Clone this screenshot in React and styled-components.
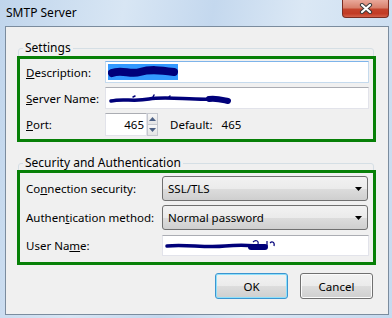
import React from "react";
import styled, { createGlobalStyle } from "styled-components";

const Global = createGlobalStyle`
  html, body {
    margin: 0;
    padding: 0;
    width: 392px;
    height: 318px;
    overflow: hidden;
  }
  body {
    font-family: "Noto Sans", "DejaVu Sans", sans-serif;
    font-size: 11.5px;
    color: #000;
  }
`;

const Frame = styled.div`
  width: 392px;
  height: 318px;
  box-sizing: border-box;
  padding: 0 3px 3px 5px;
  display: flex;
  flex-direction: column;
  background: linear-gradient(100deg, #c0d5ec 0%, #d8e6f4 28%, #c4d8ee 48%, #dbe8f5 68%, #c6daef 100%);
`;

const TitleBar = styled.div`
  height: 26px;
  display: flex;
  justify-content: space-between;
  align-items: flex-start;
  flex-shrink: 0;
`;

const Title = styled.div`
  line-height: 26px;
  margin-left: 1px;
  font-size: 12px;
`;

const CloseButton = styled.div`
  width: 47px;
  height: 18px;
  box-sizing: border-box;
  border: 1px solid #7a2d22;
  border-top: none;
  border-radius: 0 0 4px 4px;
  background: linear-gradient(#e9a89a 0%, #d8806c 45%, #c4432c 55%, #c23b25 80%, #d3614a 100%);
  display: flex;
  align-items: center;
  justify-content: center;
`;

const Content = styled.div`
  flex: 1;
  background: #f0f0f0;
  border: 1px solid #7b8c9e;
  padding: 13px 14px 0 12px;
  display: flex;
  flex-direction: column;
`;

const GroupBox = styled.fieldset`
  margin: ${p => p.$top || 0}px 0 0 0;
  padding: 0;
  min-width: 0;
  border: 1px solid #d5dfe5;
  border-radius: 3px;
`;

const Legend = styled.legend`
  margin-left: 4px;
  padding: 0 2px;
  line-height: 16px;
  font-size: 12px;
`;

const GreenBox = styled.div`
  margin: ${p => p.$shift || 0}px -3px -1px -2px;
  border: 3px solid #078007;
  padding: ${p => p.$pad};
  display: flex;
  flex-direction: column;
`;

const Row = styled.div`
  display: flex;
  align-items: center;
  height: ${p => p.$h}px;
  margin-top: ${p => p.$gap || 0}px;
`;

const Label = styled.div`
  width: ${p => p.$w}px;
  flex-shrink: 0;
  white-space: nowrap;
`;

const Key = styled.span`
  text-decoration: underline;
`;

const TextBox = styled.div`
  position: relative;
  flex: ${p => (p.$width ? "none" : 1)};
  width: ${p => (p.$width ? `${p.$width}px` : "auto")};
  height: 100%;
  box-sizing: border-box;
  background: #fff;
  border: 1px solid ${p => (p.$focus ? "#c5daed" : "#e2e3ea")};
  border-top-color: ${p => (p.$focus ? "#7eb4ea" : "#abadb3")};
  display: flex;
  align-items: center;
  justify-content: ${p => (p.$right ? "flex-end" : "flex-start")};
  padding: 0 2px 0 2px;
  overflow: hidden;
  white-space: nowrap;
`;

const Selected = styled.span`
  display: inline-block;
  width: 70px;
  height: 16px;
  background: #3399ff;
`;

const Scribble = styled.svg`
  position: absolute;
  left: ${p => p.$x}px;
  top: ${p => p.$y}px;
`;

const Spinner = styled.div`
  width: 11px;
  height: 100%;
  display: flex;
  flex-direction: column;
  flex-shrink: 0;
`;

const SpinHalf = styled.div`
  flex: 1;
  box-sizing: border-box;
  border: 1px solid #c5c8cf;
  ${p => (p.$down ? "border-top: none;" : "")}
  background: linear-gradient(#f7f7f7, #e4e4e4);
  display: flex;
  align-items: center;
  justify-content: center;
`;

const Plain = styled.span`
  margin-left: ${p => p.$ml}px;
`;

const Select = styled.div`
  flex: 1;
  height: 100%;
  margin-right: 1px;
  box-sizing: border-box;
  border: 1px solid #707070;
  border-radius: 3px;
  background: linear-gradient(#f2f2f2 0%, #ebebeb 50%, #dddddd 50%, #cfcfcf 100%);
  display: flex;
  align-items: center;
  justify-content: space-between;
  padding: 0 5px 0 5px;
`;

const ButtonRow = styled.div`
  display: flex;
  justify-content: flex-end;
  gap: 12px;
  margin-top: 8px;
  margin-right: 1px;
`;

const Button = styled.div`
  width: 73px;
  height: 26px;
  box-sizing: border-box;
  border: 1px solid ${p => (p.$default ? "#3c95d0" : "#707070")};
  border-radius: 3px;
  box-shadow: ${p => (p.$default ? "inset 0 0 0 1px #8ee0fb" : "inset 0 0 0 1px #fbfbfb")};
  background: linear-gradient(#f2f2f2 0%, #ebebeb 50%, #dddddd 50%, #cfcfcf 100%);
  display: flex;
  align-items: center;
  justify-content: center;
`;

const Arrow = ({ up }) => (
  <svg width="7" height="4" viewBox="0 0 7 4">
    <polygon points={up ? "0,4 7,4 3.5,0" : "0,0 7,0 3.5,4"} fill="#4d6185" />
  </svg>
);

const DropArrow = () => (
  <svg width="7" height="4" viewBox="0 0 7 4">
    <polygon points="0,0 7,0 3.5,4" fill="#000" />
  </svg>
);

export default function App() {
  return (
    <Frame>
      <Global />
      <TitleBar>
        <Title>SMTP Server</Title>
        <CloseButton>
          <svg width="14" height="11" viewBox="0 0 14 11">
            <path d="M3 2 L11 9 M11 2 L3 9" stroke="#3b3b3b" strokeWidth="4.2" strokeLinecap="round" />
            <path d="M3 2 L11 9 M11 2 L3 9" stroke="#fff" strokeWidth="2.2" strokeLinecap="round" />
          </svg>
        </CloseButton>
      </TitleBar>

      <Content>
        <GroupBox>
          <Legend>Settings</Legend>
          <GreenBox $pad="2px 4px 3px 6px">
            <Row $h={22}>
              <Label $w={79}><Key>D</Key>escription:</Label>
              <TextBox $focus>
                <Selected />
                <Scribble $x={2} $y={2} width="72" height="16" viewBox="0 0 72 16">
                  <path d="M4 9 C 14 5, 22 11, 32 8 S 52 6, 66 8" stroke="#00007a" strokeWidth="8" fill="none" strokeLinecap="round" />
                </Scribble>
              </TextBox>
            </Row>
            <Row $h={22} $gap={4}>
              <Label $w={79}><Key>S</Key>erver Name:</Label>
              <TextBox>
                <Scribble $x={3} $y={3} width="124" height="16" viewBox="0 0 124 16">
                  <path d="M2 10 C 14 7, 24 11, 40 8 S 80 9, 104 8" stroke="#00007a" strokeWidth="3.5" fill="none" strokeLinecap="round" />
                  <path d="M24 6 L26 5 M44 6 L45 4 M60 6 L61 5" stroke="#00007a" strokeWidth="1.5" fill="none" strokeLinecap="round" />
                  <path d="M100 8 C 108 7, 114 9, 119 10" stroke="#00007a" strokeWidth="6" fill="none" strokeLinecap="round" />
                </Scribble>
              </TextBox>
            </Row>
            <Row $h={23} $gap={4}>
              <Label $w={79}><Key>P</Key>ort:</Label>
              <TextBox $width={42} $right>465</TextBox>
              <Spinner>
                <SpinHalf><Arrow up /></SpinHalf>
                <SpinHalf $down><Arrow /></SpinHalf>
              </Spinner>
              <Plain $ml={12}>Default:</Plain>
              <Plain $ml={9}>465</Plain>
            </Row>
          </GreenBox>
        </GroupBox>

        <GroupBox $top={13}>
          <Legend>Security and Authentication</Legend>
          <GreenBox $shift={-1} $pad="3px 4px 6px 6px">
            <Row $h={25}>
              <Label $w={136}>Co<Key>n</Key>nection security:</Label>
              <Select>
                <span>SSL/TLS</span>
                <DropArrow />
              </Select>
            </Row>
            <Row $h={25} $gap={4}>
              <Label $w={136}>Authen<Key>t</Key>ication method:</Label>
              <Select>
                <span>Normal password</span>
                <DropArrow />
              </Select>
            </Row>
            <Row $h={21} $gap={5}>
              <Label $w={136}>User Na<Key>m</Key>e:</Label>
              <TextBox>
                <Scribble $x={2} $y={2} width="112" height="14" viewBox="0 0 112 14">
                  <path d="M2 8 C 20 6, 40 10, 60 8 S 88 8, 96 8" stroke="#00007a" strokeWidth="3.5" fill="none" strokeLinecap="round" />
                  <path d="M86 9 L100 9" stroke="#00007a" strokeWidth="6" fill="none" strokeLinecap="round" />
                  <path d="M88 4 C 90 2, 94 2, 93 6 M102 3 L102 8 M105 5 C 107 3, 110 4, 109 8" stroke="#00007a" strokeWidth="1.2" fill="none" />
                </Scribble>
              </TextBox>
            </Row>
          </GreenBox>
        </GroupBox>

        <ButtonRow>
          <Button $default>OK</Button>
          <Button>Cancel</Button>
        </ButtonRow>
      </Content>
    </Frame>
  );
}
